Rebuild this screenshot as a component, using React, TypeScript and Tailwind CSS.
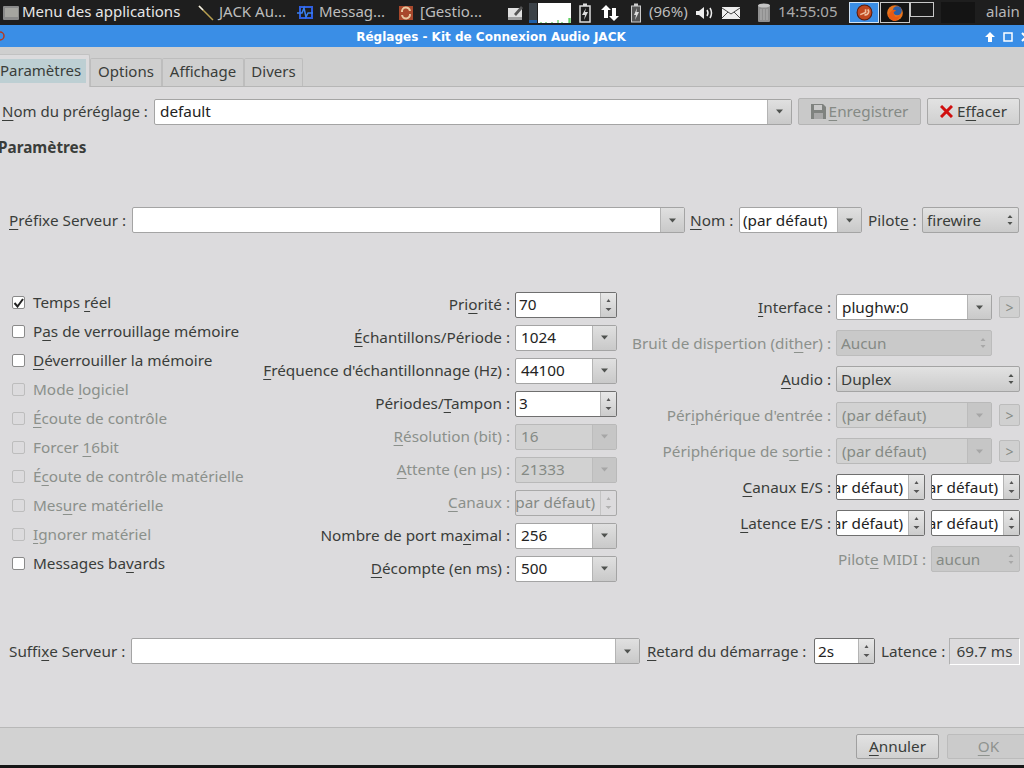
import React from "react";

const Arrow = ({ dis }: { dis?: boolean }) => (
  <svg width="7" height="5" viewBox="0 0 7 5"><path d="M0 0.5H7L3.5 4.5Z" fill={dis ? "#a6a6a6" : "#4f524f"} /></svg>
);

const UpDown = ({ dis }: { dis?: boolean }) => (
  <svg width="6" height="12" viewBox="0 0 6 12">
    <path d="M3 1L5.5 4H0.5Z" fill={dis ? "#a8a8a8" : "#4f524f"} />
    <path d="M0.5 8H5.5L3 11Z" fill={dis ? "#a8a8a8" : "#4f524f"} />
  </svg>
);

const SpinArrows = ({ dis }: { dis?: boolean }) => (
  <div className="h-full w-full flex flex-col items-center justify-between py-[6px]">
    <svg width="5" height="3" viewBox="0 0 5 3"><path d="M2.5 0L4.5 3H0.5Z" fill={dis ? "#b0b0b0" : "#555"} /></svg>
    <svg width="7" height="3" viewBox="0 0 7 3"><path d="M0.5 0H6.5L3.5 3Z" fill={dis ? "#b0b0b0" : "#555"} /></svg>
  </div>
);

function Combo({ w, value, dis, pad = "pl-[7px]" }: { w: string; value: string; dis?: boolean; pad?: string }) {
  return (
    <div className={`${w} h-[26px] shrink-0 flex rounded-[2px] border ${dis ? "border-[#b9b9b9] bg-[#d2d2d2]" : "border-[#a4a4a4] bg-white"}`}>
      <div className={`flex-1 min-w-0 flex items-center ${pad} ${dis ? "text-[#858a85]" : "text-[#222]"} overflow-hidden whitespace-nowrap`}>{value}</div>
      <div className={`w-[24px] shrink-0 flex items-center justify-center border-l ${dis ? "border-[#bcbcbc] bg-[#c6c6c6]" : "border-[#b4b4b4] bg-gradient-to-b from-[#e0e0e0] to-[#c9c9c9]"}`}>
        <Arrow dis={dis} />
      </div>
    </div>
  );
}

function Spin({ w, value, dis, right }: { w: string; value: string; dis?: boolean; right?: boolean }) {
  return (
    <div className={`${w} h-[26px] shrink-0 flex rounded-[2px] border ${dis ? "border-[#a9a9a9] bg-[#dcdbdd]" : "border-[#6f6f6f] bg-white"}`}>
      <div className={`flex-1 min-w-0 flex items-center overflow-hidden whitespace-nowrap ${right ? "justify-end pr-[5px]" : "pl-[3px]"} ${dis ? "text-[#858a85]" : "text-[#222]"}`}>{value}</div>
      <div className={`w-[16px] shrink-0 border-l ${dis ? "border-[#c4c4c4]" : "border-[#b4b4b4] bg-gradient-to-b from-[#e8e8e8] to-[#cccccc]"}`}>
        <SpinArrows dis={dis} />
      </div>
    </div>
  );
}

function Select({ w, value, dis }: { w: string; value: string; dis?: boolean }) {
  return (
    <div className={`${w} h-[26px] shrink-0 flex items-center justify-between pl-[4px] pr-[5px] rounded-[2px] border ${dis ? "border-[#bcbcbc] bg-[#c9c9c9] text-[#858a85]" : "border-[#a4a4a4] bg-gradient-to-b from-[#e2e2e2] to-[#cbcbcb] text-[#3a3d3a]"}`}>
      <span>{value}</span>
      <UpDown dis={dis} />
    </div>
  );
}

function More() {
  return (
    <div className="w-[21px] h-[22px] shrink-0 flex items-center justify-center rounded-[2px] border border-[#bcbcbc] bg-[#d0d0d0] text-[#858a85] text-[14px]">&gt;</div>
  );
}

function Check({ label, checked, dis }: { label: React.ReactNode; checked?: boolean; dis?: boolean }) {
  return (
    <div className={`h-[29px] flex items-center gap-[8px] ${dis ? "text-[#8b908b]" : ""}`}>
      <div className={`w-[13px] h-[13px] rounded-[2px] border flex items-center justify-center ${dis ? "border-[#bdbdbd] bg-[#dcdbdd]" : "border-[#8a8a8a] bg-white"}`}>
        {checked && (
          <svg width="11" height="10" viewBox="0 0 11 10"><path d="M1.5 5L4.5 8.5L10 1" fill="none" stroke="#222" strokeWidth="2" /></svg>
        )}
      </div>
      <span className="whitespace-nowrap">{label}</span>
    </div>
  );
}

function Row({ label, dis, children, h, mr }: { label: React.ReactNode; dis?: boolean; children: React.ReactNode; h: string; mr?: string }) {
  return (
    <div className={`${h} ${mr ?? ""} flex items-center justify-end gap-[5px]`}>
      <span className={`whitespace-nowrap ${dis ? "text-[#8b908b]" : ""}`}>{label}</span>
      {children}
    </div>
  );
}

const U = ({ children }: { children: React.ReactNode }) => <u className="underline underline-offset-[3px] decoration-1">{children}</u>;

const Tab = ({ children, w }: { children: React.ReactNode; w: string }) => (
  <div className={`${w} h-[28px] pb-[2px] flex items-center justify-center rounded-t-[2px] border border-b-0 border-[#bdbdbd] bg-[#cfcfcf] text-[#3a3d3a]`}>{children}</div>
);

function Panel() {
  return (
    <div className="h-[25px] shrink-0 flex items-center bg-[#1e1e1e] text-[#bdbdbd] font-['Noto_Sans',sans-serif] text-[15px] whitespace-nowrap">
      <svg className="ml-[2px] shrink-0" width="18" height="16" viewBox="0 0 18 16"><rect x="1" y="1" width="16" height="14" rx="1" fill="#8a8a8a" /><rect x="3" y="3" width="13" height="9" fill="#a5a5a0" /></svg>
      <span className="ml-[2px] mb-[2px] w-[176px] text-[#e6e6e6]">Menu des applications</span>
      <svg className="shrink-0" width="16" height="16" viewBox="0 0 16 16"><path d="M1 1L15 15" stroke="#b8a050" strokeWidth="1.5" /><path d="M1 1L5 5" stroke="#eee" strokeWidth="1.5" /></svg>
      <span className="ml-[5px] mb-[2px] w-[78px]">JACK Au...</span>
      <svg className="shrink-0" width="16" height="15" viewBox="0 0 16 15"><rect x="3" y="2" width="12" height="11" fill="none" stroke="#2f5fe0" strokeWidth="2" /><path d="M0 8H5L7 3L9 12L11 8H16" fill="none" stroke="#3a80f0" strokeWidth="1.5" /></svg>
      <span className="ml-[6px] mb-[2px] w-[80px]">Messag...</span>
      <svg className="shrink-0" width="14" height="14" viewBox="0 0 14 14"><rect width="14" height="14" fill="#a8482c" /><path d="M3 6A4 4 0 0 1 11 5M11 8A4 4 0 0 1 3 9" fill="none" stroke="#e8c8a0" strokeWidth="2" /></svg>
      <span className="ml-[7px] mb-[2px] w-[87px]">[Gestio...</span>
      <svg className="shrink-0" width="17" height="16" viewBox="0 0 17 16"><rect x="1" y="3" width="14" height="12" fill="#e0e0e0" /><rect x="1" y="12" width="14" height="3" fill="#a0a0a0" /><path d="M7 9L14 1L16 3L9 11Z" fill="#555" /></svg>
      <div className="ml-[5px] w-[8px] h-[20px] bg-[#3c4248] shrink-0 flex items-end"><div className="w-full h-[3px] bg-[#1f5fa8]" /></div>
      <div className="ml-[1px] w-[33px] h-[20px] bg-white shrink-0 flex items-end">
        <svg width="33" height="5" viewBox="0 0 33 5"><path d="M3 5V4M8 5V4M14 5V4M20 5V2M24 5V4M31 5V0M32 5V0" stroke="#30c030" /></svg>
      </div>
      <svg className="ml-[8px] shrink-0" width="12" height="20" viewBox="0 0 12 20"><rect x="1" y="3" width="10" height="16" fill="none" stroke="#ddd" strokeWidth="1.5" /><rect x="4" y="0.5" width="4" height="2.5" fill="#ddd" /><path d="M7 5L3 12H6L5 17L9 9H6Z" fill="#ddd" /></svg>
      <svg className="ml-[10px] shrink-0" width="18" height="18" viewBox="0 0 18 18"><path d="M5 1L10 6H7V14H3V6H0Z" fill="#fff" /><path d="M13 17L18 12H15V4H11V12H8Z" fill="#fff" /></svg>
      <svg className="ml-[12px] shrink-0" width="10" height="20" viewBox="0 0 10 20"><rect x="0.5" y="3" width="9" height="16" fill="#555" stroke="#ccc" /><rect x="3" y="0.5" width="4" height="2.5" fill="#ccc" /><path d="M6 5L3 12H5L4 17L8 9H5.5Z" fill="#ddd" /></svg>
      <span className="ml-[8px] mb-[2px] w-[41px]">(96%)</span>
      <svg className="ml-[5px] shrink-0" width="20" height="16" viewBox="0 0 20 16"><path d="M1 6H4L9 2V14L4 10H1Z" fill="#eee" /><path d="M12 5Q14 8 12 11M15 3Q18 8 15 13" fill="none" stroke="#eee" strokeWidth="1.5" /></svg>
      <svg className="ml-[7px] shrink-0" width="18" height="12" viewBox="0 0 18 12"><rect width="18" height="12" fill="#eee" /><path d="M0 1L9 7L18 1M0 11L6 5M18 11L12 5" fill="none" stroke="#444" /></svg>
      <svg className="ml-[17px] shrink-0" width="14" height="20" viewBox="0 0 14 20"><rect x="1" y="2" width="12" height="17" rx="1" fill="#8f8f8f" /><ellipse cx="7" cy="2.5" rx="6" ry="2" fill="#c4c4c4" /><path d="M4 6V17M7 6V17M10 6V17" stroke="#b4b4b4" /></svg>
      <span className="ml-[7px] mb-[2px] w-[71px] text-[#ababab]">14:55:05</span>
      <div className="w-[30px] h-[21px] shrink-0 bg-[#3a8ee6] border border-[#cfe2f5] flex items-center justify-center">
        <svg width="17" height="17" viewBox="0 0 16 16"><circle cx="8" cy="8" r="7" fill="#c04820" stroke="#5a1c0c" /><path d="M4 10L9 8L9 5M11 5A3 3 0 0 1 8 10" fill="none" stroke="#f0c0a0" strokeWidth="1.5" /></svg>
      </div>
      <div className="ml-[1px] w-[30px] h-[21px] shrink-0 bg-[#141414] border border-[#c8c8c8] flex items-center justify-center">
        <svg width="18" height="18" viewBox="0 0 16 16"><circle cx="8" cy="8" r="7" fill="#e8741c" /><circle cx="10" cy="6" r="4" fill="#2a5fa8" /><path d="M2 10Q6 3 9 6Q5 7 8 11Q11 12 13 9Q11 15 7 15Q3 14 2 10Z" fill="#e85a14" /></svg>
      </div>
      <div className="w-[24px] h-[15px] mb-[6px] shrink-0 border border-[#c8c8c8] bg-[#1a1a1a]" />
      <div className="ml-[7px] w-[34px] h-[21px] shrink-0 bg-[#141414]" />
      <span className="ml-[11px] mb-[2px] text-[#b8b8b8]">alain</span>
    </div>
  );
}

function TitleBar() {
  return (
    <div className="relative h-[22px] shrink-0 flex items-center justify-center pr-[42px] pt-[2px] bg-[#3a8ee6] text-white font-['DejaVu_Sans',sans-serif] font-bold text-[12px]">
      <svg className="absolute -left-[3px] top-[5px]" width="8" height="12" viewBox="0 0 8 12"><circle cx="3" cy="6" r="4" fill="none" stroke="#b83a1c" strokeWidth="1.5" /></svg>
      <span>Réglages - Kit de Connexion Audio JACK</span>
      <div className="absolute right-[-7px] top-[7px] flex items-center gap-[6px]">
        <svg width="10" height="10" viewBox="0 0 10 10"><path d="M5 0L10 5H7V10H3V5H0Z" fill="#fff" /></svg>
        <svg className="ml-[2px]" width="10" height="10" viewBox="0 0 10 10"><rect x="1" y="1" width="8" height="8" fill="none" stroke="#fff" strokeWidth="1.5" /></svg>
        <svg className="ml-[2px]" width="10" height="10" viewBox="0 0 10 10"><path d="M1 1L9 9M9 1L1 9" stroke="#fff" strokeWidth="2" /></svg>
      </div>
    </div>
  );
}

function Tabs() {
  return (
    <div className="h-[40px] shrink-0 flex items-end bg-[#cfcfcf] border-b border-[#b6b6b6] text-[15px]">
      <div className="-ml-[2px] w-[92px] h-[33px] mb-[-1px] shrink-0 pt-[4px] pr-[3px] rounded-t-[2px] border border-b-0 border-[#c2c2c2] bg-[#dcdbdd]">
        <div className="h-[24px] pb-[2px] pl-[1px] flex items-center bg-[#bdcfd3] text-[#3a3d3a]">Paramètres</div>
      </div>
      <Tab w="w-[72px]">Options</Tab>
      <Tab w="w-[82px]">Affichage</Tab>
      <Tab w="w-[59px]">Divers</Tab>
    </div>
  );
}

export default function App() {
  return (
    <div className="w-[1024px] h-[768px] flex flex-col overflow-hidden bg-[#dcdbdd] font-['Noto_Sans',sans-serif] text-[15.3px] text-[#3a3d3a]">
      <Panel />
      <TitleBar />
      <Tabs />
      <main className="flex-1 min-h-0 flex flex-col">
        <div className="mt-[11px] h-[27px] flex items-center pl-[2px]">
          <span className="w-[152px] whitespace-nowrap text-[15px]"><U>N</U>om du préréglage :</span>
          <Combo w="w-[638px]" value="default" pad="pl-[5px]" />
          <div className="ml-[6px] w-[123px] h-[27px] flex items-center justify-center gap-[3px] rounded-[2px] border border-[#b4b4b4] bg-[#c9c9c9] text-[#858a85]">
            <svg width="15" height="15" viewBox="0 0 15 15"><path d="M0 0H12L15 3V15H0Z" fill="#7f827f" /><rect x="3" y="1" width="8" height="5" fill="#c9c9c9" /><rect x="3" y="9" width="9" height="6" fill="#a8a8a8" /></svg>
            <span><U>E</U>nregistrer</span>
          </div>
          <div className="ml-[6px] w-[93px] h-[27px] flex items-center justify-center gap-[4px] rounded-[2px] border border-[#a8a8a8] bg-gradient-to-b from-[#e2e2e2] to-[#d0d0d0]">
            <svg width="13" height="13" viewBox="0 0 13 13"><path d="M1 1L12 12M12 1L1 12" stroke="#d01010" strokeWidth="3" /></svg>
            <span>E<U>f</U>facer</span>
          </div>
        </div>
        <div className="mt-[11px] h-[22px] -ml-[2px] flex items-center font-bold">Paramètres</div>
        <div className="mt-[49px] h-[26px] flex items-center pl-[9px]">
          <span className="w-[123px] whitespace-nowrap"><U>P</U>réfixe Serveur :</span>
          <Combo w="w-[553px]" value="" />
          <span className="ml-[5px] w-[49px] whitespace-nowrap"><U>N</U>om :</span>
          <Combo w="w-[123px]" value="(par défaut)" pad="pl-[3px]" />
          <span className="ml-[6px] w-[54px] whitespace-nowrap">Pilot<U>e</U> :</span>
          <Select w="w-[97px]" value="firewire" />
        </div>
        <div className="mt-[54px] h-[351px] flex">
          <div className="w-[245px] pl-[12px] pt-[1px]">
            <Check checked label={<>Temps <U>r</U>éel</>} />
            <Check label={<>P<U>a</U>s de verrouillage mémoire</>} />
            <Check label={<><U>D</U>éverrouiller la mémoire</>} />
            <Check dis label={<>Mode <U>l</U>ogiciel</>} />
            <Check dis label={<><U>É</U>coute de contrôle</>} />
            <Check dis label={<>Forcer <U>1</U>6bit</>} />
            <Check dis label={<>É<U>c</U>oute de contrôle matérielle</>} />
            <Check dis label={<>Mes<U>u</U>re matérielle</>} />
            <Check dis label={<><U>I</U>gnorer matériel</>} />
            <Check label={<>Messages ba<U>v</U>ards</>} />
          </div>
          <div className="w-[372px] pt-[1px] flex flex-col">
            <Row h="h-[33px]" label={<>Pri<U>o</U>rité :</>}><Spin w="w-[102px]" value="70" /></Row>
            <Row h="h-[33px]" label={<><U>É</U>chantillons/Période :</>}><Combo w="w-[102px]" value="1024" pad="pl-[5px]" /></Row>
            <Row h="h-[33px]" label={<><U>F</U>réquence d'échantillonnage (Hz) :</>}><Combo w="w-[102px]" value="44100" pad="pl-[5px]" /></Row>
            <Row h="h-[33px]" label={<>Périodes/<U>T</U>ampon :</>}><Spin w="w-[102px]" value="3" /></Row>
            <Row h="h-[33px]" dis label={<><U>R</U>ésolution (bit) :</>}><Combo dis w="w-[102px]" value="16" pad="pl-[5px]" /></Row>
            <Row h="h-[33px]" dis label={<><U>A</U>ttente (en µs) :</>}><Combo dis w="w-[102px]" value="21333" pad="pl-[5px]" /></Row>
            <Row h="h-[33px]" dis label={<><U>C</U>anaux :</>}><Spin dis right w="w-[102px]" value="(par défaut)" /></Row>
            <Row h="h-[33px]" label={<>Nombre de port ma<U>x</U>imal :</>}><Combo w="w-[102px]" value="256" pad="pl-[5px]" /></Row>
            <Row h="h-[33px]" label={<><U>D</U>écompte (en ms) :</>}><Combo w="w-[102px]" value="500" pad="pl-[5px]" /></Row>
          </div>
          <div className="w-[403px] pt-[2px] flex flex-col">
            <Row h="h-[36px]" label={<><U>I</U>nterface :</>}>
              <Combo w="w-[156px]" value="plughw:0" pad="pl-[5px]" />
              <div className="ml-[2px]"><More /></div>
            </Row>
            <Row h="h-[36px]" mr="mr-[28px]" dis label={<>Bruit de dispertion (dit<U>h</U>er) :</>}><Select dis w="w-[156px]" value="Aucun" /></Row>
            <Row h="h-[36px]" label={<><U>A</U>udio :</>}><Select w="w-[184px]" value="Duplex" /></Row>
            <Row h="h-[36px]" dis label={<>Pér<U>i</U>phérique d'entrée :</>}>
              <Combo dis w="w-[156px]" value="(par défaut)" pad="pl-[5px]" />
              <div className="ml-[2px]"><More /></div>
            </Row>
            <Row h="h-[36px]" dis label={<>Périphérique de s<U>o</U>rtie :</>}>
              <Combo dis w="w-[156px]" value="(par défaut)" pad="pl-[5px]" />
              <div className="ml-[2px]"><More /></div>
            </Row>
            <Row h="h-[36px]" label={<><U>C</U>anaux E/S :</>}>
              <Spin right w="w-[89px]" value="(par défaut)" />
              <div className="ml-[1px]"><Spin right w="w-[89px]" value="(par défaut)" /></div>
            </Row>
            <Row h="h-[36px]" label={<><U>L</U>atence E/S :</>}>
              <Spin right w="w-[89px]" value="(par défaut)" />
              <div className="ml-[1px]"><Spin right w="w-[89px]" value="(par défaut)" /></div>
            </Row>
            <Row h="h-[36px]" dis label={<>Pilot<U>e</U> MIDI :</>}><Select dis w="w-[89px]" value="aucun" /></Row>
          </div>
        </div>
        <div className="h-[26px] flex items-center pl-[9px]">
          <span className="w-[122px] whitespace-nowrap">Suffi<U>x</U>e Serveur :</span>
          <Combo w="w-[509px]" value="" />
          <span className="ml-[7px] w-[167px] whitespace-nowrap text-[15px]"><U>R</U>etard du démarrage :</span>
          <Spin w="w-[61px]" value="2s" />
          <span className="ml-[6px] w-[68px] whitespace-nowrap">Latence :</span>
          <div className="w-[71px] h-[27px] flex items-center justify-center border border-t-[#b0b0b0] border-l-[#b0b0b0] border-r-white border-b-white">69.7 ms</div>
        </div>
      </main>
      <footer className="h-[38px] shrink-0 flex items-center bg-[#d2d2d2] border-t border-[#b8b8b8] pl-[856px]">
        <div className="w-[83px] h-[25px] mb-[1px] shrink-0 flex items-center justify-center rounded-[2px] border border-[#a0a0a0] bg-gradient-to-b from-[#e2e2e2] to-[#d0d0d0]"><span><U>A</U>nnuler</span></div>
        <div className="ml-[8px] w-[83px] h-[25px] mb-[1px] shrink-0 flex items-center justify-center rounded-[2px] border border-[#bcbcbc] bg-[#cbcbcb] text-[#8f938f]"><span><U>O</U>K</span></div>
      </footer>
      <div className="h-[3px] shrink-0 bg-[#161616]" />
    </div>
  );
}
